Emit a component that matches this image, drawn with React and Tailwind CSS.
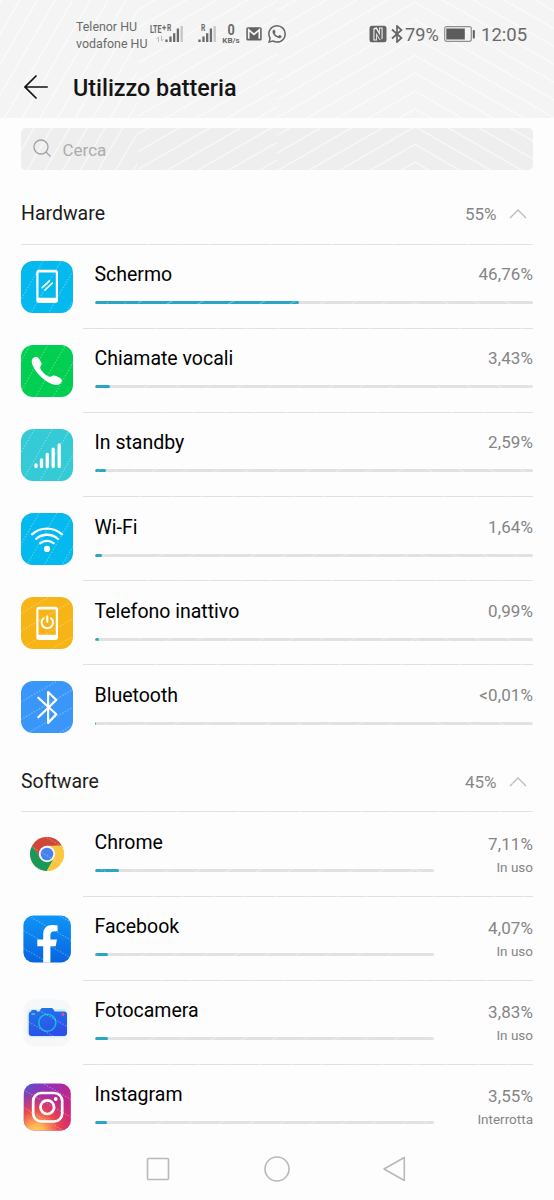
import React from "react";

const Tile = ({ children, className }) => (
  <div className={`size-[52px] rounded-[12px] ${className}`}>
    <svg viewBox="0 0 52 52" className="size-full" fill="none" stroke="#fff" strokeLinecap="round" strokeLinejoin="round">
      {children}
    </svg>
  </div>
);

const PhoneOutline = () => (
  <path fill="#fff" stroke="none" fillRule="evenodd" d="M18.300 8.800h15.700a3 3 0 0 1 3 3v27.300a3 3 0 0 1-3 3h-15.700a3 3 0 0 1-3-3V11.800a3 3 0 0 1 3-3Zm-.8 2.700v25.300h17.300V11.500Z" />
);

const ScreenIcon = () => (
  <Tile className="bg-[#04b9ed]">
    <PhoneOutline />
    <path strokeWidth="1.700" d="M21.200 26.700l7.200-6.800M24 29l7.300-7" />
  </Tile>
);

const CallIcon = () => (
  <Tile className="bg-[#02ce51]">
    <path fill="#fff" stroke="none" d="M11.600 13.600c.9-1.300 2.900-2.200 4.200-1.900 1.700.9 3.900 4.200 4.800 6.600.5 1.600-1.600 3-1.400 4.400.8 3.200 6.100 8.300 9.300 9.100 1.500.3 2.700-1.700 4.500-1.300 2.500.6 6 2.200 7.500 3.700 1.200 1.600-.5 4.200-2.400 5.200-3.900 1.900-10-.6-15.500-5.300-6.300-5.400-10.700-11.500-11.800-16.700-.2-1.300.1-2.700.8-3.800Z" />
  </Tile>
);

const StandbyIcon = () => (
  <Tile className="bg-[#34cbd6]">
    <path strokeWidth="3.300" d="M15 37.500v-1.600M20.500 37.500v-6.600M26.300 37.500V25.300M32.200 37.500V20.100M38.200 37.500V15.900" />
  </Tile>
);

const WifiIcon = () => (
  <Tile className="bg-[#04b9ed]">
    <path strokeWidth="2.300" d="M11 21.300a22.500 22.500 0 0 1 30 0M15.200 25.800a16.500 16.500 0 0 1 21.600 0M19.400 30.200a10.500 10.500 0 0 1 13.200 0" />
    <circle cx="26" cy="35.900" r="3.100" fill="#fff" stroke="none" />
  </Tile>
);

const IdleIcon = () => (
  <Tile className="bg-[#f7b417]">
    <svg x="0" y="1" width="52" height="52"><PhoneOutline /></svg>
    <path strokeWidth="2" d="M22.600 21.200a5.700 5.700 0 1 0 7.400 0M26.300 19.500v5.500" />
  </Tile>
);

const BluetoothIcon = () => (
  <Tile className="bg-[#3a97f9]">
    <path strokeWidth="2.200" d="M17.300 16.800l18 16.500-8.200 8.700V11l8.200 8L17.300 36.300" />
  </Tile>
);

const ChromeIcon = () => (
  <svg viewBox="-26 -26 52 52" className="size-[52px]">
    <circle r="17" fill="#fbc741" />
    <path fill="#d0463b" d="M-14.700-8.500A17 17 0 0 1 14.900-8.200H0L-7.100 4Z" />
    <path fill="#199857" d="M-14.700-8.500L-7.100 4.100L0 8.200L7 4L-.2 17A17 17 0 0 1-14.700-8.500Z" />
    <path fill="#fbc741" d="M14.900-8.200A17 17 0 0 1-.2 17L7.100 4.100L7-8.200Z" />
    <circle r="8.200" fill="#f5f5f5" />
    <circle r="6.300" fill="#4682ee" />
  </svg>
);

const FacebookIcon = () => (
  <svg viewBox="0 0 52 52" className="size-[52px]">
    <defs>
      <linearGradient id="fb" x1="0" y1="0" x2="0" y2="1">
        <stop stopColor="#0f95f8" />
        <stop offset="1" stopColor="#0765df" />
      </linearGradient>
    </defs>
    <rect x="2.400" y="2.500" width="47.500" height="47" rx="10" fill="url(#fb)" />
    <path fill="#fff" d="M22.200 49.500V33.200h-5.900v-6.700h5.900v-5.300c0-6 3.400-9.300 9-9.300 2.200 0 4.100.2 5.400.5v5.800h-3.200c-2.800 0-4 1.400-4 3.700v4.600h6.500l-1.200 6.700h-5.300v16.300Z" />
  </svg>
);

const CameraIcon = () => (
  <svg viewBox="0 0 52 52" className="size-[52px]">
    <defs>
      <linearGradient id="cam" x1="0" y1="0" x2=".3" y2="1">
        <stop stopColor="#1e78ea" />
        <stop offset="1" stopColor="#2c50e8" />
      </linearGradient>
    </defs>
    <rect x="2.500" y="2.500" width="47" height="47" rx="11" fill="#f5f7f8" />
    <rect x="6.300" y="12" width="40" height="28.500" rx="5" fill="#d3ecfb" />
    <path fill="url(#cam)" d="M10 14.500q0-1.500 1.500-1.500h3q1.500 0 1.500 1.500h2.300l1.500-2.500q.6-1 1.700-1h9q1.100 0 1.700 1l1.500 2.500H43a3 3 0 0 1 3 3V36a3 3 0 0 1-3 3H10.800a3 3 0 0 1-3-3V17.500q0-2.500 2.200-3Z" />
    <circle cx="26.300" cy="25.700" r="8.500" fill="none" stroke="#17b9dc" strokeWidth="1.600" />
    <circle cx="42" cy="17.500" r="1.400" fill="#e0567d" />
    <path stroke="#76b2f5" strokeWidth="1.500" d="M10.500 17h3.500" />
  </svg>
);

const InstagramIcon = () => (
  <svg viewBox="0 0 52 52" className="size-[52px]">
    <defs>
      <linearGradient id="igA" x1="0" y1="0" x2="1" y2=".6">
        <stop stopColor="#5553d0" />
        <stop offset=".45" stopColor="#9a2fb4" />
        <stop offset="1" stopColor="#cf2379" />
      </linearGradient>
      <radialGradient id="igB" cx=".27" cy="1.050" r=".95">
        <stop stopColor="#ffd567" />
        <stop offset=".2" stopColor="#fdb155" />
        <stop offset=".5" stopColor="#ef4a49" stopOpacity=".95" />
        <stop offset="1" stopColor="#d02a78" stopOpacity="0" />
      </radialGradient>
    </defs>
    <rect x="2.800" y="2.500" width="47" height="47" rx="10" fill="url(#igA)" />
    <rect x="2.800" y="2.500" width="47" height="47" rx="10" fill="url(#igB)" />
    <g fill="none" stroke="#fff" strokeWidth="2.700">
      <rect x="12.200" y="12" width="29" height="28.500" rx="8" />
      <circle cx="26.300" cy="26.200" r="6.800" />
    </g>
    <circle cx="34.700" cy="18" r="1.900" fill="#fff" />
  </svg>
);

const hardware = [
  { name: "Schermo", value: "46,76%", width: 46.8, Icon: ScreenIcon },
  { name: "Chiamate vocali", value: "3,43%", width: 3.5, Icon: CallIcon },
  { name: "In standby", value: "2,59%", width: 2.6, Icon: StandbyIcon },
  { name: "Wi-Fi", value: "1,64%", width: 1.7, Icon: WifiIcon },
  { name: "Telefono inattivo", value: "0,99%", width: 1.0, Icon: IdleIcon },
  { name: "Bluetooth", value: "<0,01%", width: 0.15, Icon: BluetoothIcon },
];

const software = [
  { name: "Chrome", value: "7,11%", width: 7.2, status: "In uso", Icon: ChromeIcon },
  { name: "Facebook", value: "4,07%", width: 4.1, status: "In uso", Icon: FacebookIcon },
  { name: "Fotocamera", value: "3,83%", width: 3.9, status: "In uso", Icon: CameraIcon },
  { name: "Instagram", value: "3,55%", width: 3.6, status: "Interrotta", Icon: InstagramIcon },
];

const Row = ({ item, last }) => {
  const { name, value, width, status, Icon } = item;
  return (
    <div className="flex h-[84.15px] pl-[21px]">
      <div className="w-[62px] shrink-0 pt-4">
        <Icon />
      </div>
      <div className={`mr-[21px] flex flex-1 border-b pl-[11.5px] ${last ? "border-transparent" : "border-[#e0e0e0]"}`}>
        <div className="flex-1">
          <div className="relative z-10 mt-[17.5px] h-[26px] text-[19.5px] leading-[26px] whitespace-nowrap text-black">{name}</div>
          <div className={`mt-[13px] h-[3px] overflow-hidden rounded-full bg-[#e1e1e1] ${status ? "w-[339px]" : "w-[438px]"}`}>
            <div className="h-full rounded-full bg-[#27a6c6]" style={{ width: `${width}%` }} />
          </div>
        </div>
        <div className={`relative z-10 flex w-0 flex-col items-end whitespace-nowrap text-[#858585] ${status ? "pt-[21.5px]" : "pt-[19.5px]"}`}>
          <span className="text-[17px] leading-5 tracking-[0.1px]">{value}</span>
          {status && <span className="mt-1 text-[13.5px] leading-[18px]">{status}</span>}
        </div>
      </div>
    </div>
  );
};

const Section = ({ title, total, items }) => (
  <section>
    <div className="mx-[21px] flex h-[63px] items-center border-b border-[#e0e0e0] pt-[3px] text-[#1b1b1b]">
      <h2 className="flex-1 text-[19.5px] leading-6">{title}</h2>
      <span className="text-[17px] leading-6 text-[#858585]">{total}</span>
      <svg viewBox="0 0 18 10" className="mr-[6px] ml-[12.5px] h-[10px] w-[18px]" fill="none" stroke="#bdbdbd" strokeWidth="1.400">
        <path d="M1 9l8-8 8 8" />
      </svg>
    </div>
    {items.map((item, i) => (
      <Row key={item.name} item={item} last={i === items.length - 1} />
    ))}
  </section>
);

const Signal = ({ className }) => (
  <svg viewBox="0 0 18 16" className={`h-4 w-[18px] ${className}`} fill="none" strokeWidth="2.300">
    <path stroke="#6a6a6a" d="M1.500 16v-2.500M5.500 16v-5.500M9.200 16V7.200M12.900 16V2.500" />
    <path stroke="#c6c6c6" d="M16.700 16V0" />
  </svg>
);

const StatusBar = () => (
  <div className="relative z-10 flex h-[58px] text-[#6a6a6a]">
    <div className="ml-[76px] w-[74px] shrink-0 pt-[17.5px] text-[12.400px] leading-[17px] whitespace-nowrap">
      <div>Telenor HU</div>
      <div>vodafone HU</div>
    </div>
    <div className="relative mt-[25px] h-[18px] w-[36px] shrink-0">
      <span className="absolute top-[-1px] left-0 origin-left scale-x-[.68] text-[10.500px] leading-[11px] font-bold whitespace-nowrap">LTE</span>
      <span className="absolute top-[-1px] left-[12px] origin-left scale-x-[.85] text-[9px] leading-[9px] font-bold">+</span>
      <span className="absolute top-[-1px] left-[17px] origin-left scale-x-75 text-[9px] leading-[9px] font-bold">R</span>
      <svg viewBox="0 0 8 6" className="absolute top-[11px] left-[6px] h-[6px] w-2" fill="none" stroke="#bbb">
        <path d="M2.500 6V1L.5 3M5.500 0v5l2-2" />
      </svg>
      <Signal className="absolute top-px left-[15px]" />
    </div>
    <div className="relative mt-[25px] ml-[12px] h-[18px] w-[22px] shrink-0">
      <span className="absolute top-[-1px] left-[3px] origin-left scale-x-75 text-[9px] leading-[9px] font-bold">R</span>
      <Signal className="absolute top-px left-0" />
    </div>
    <div className="mt-[24px] ml-[2px] flex w-[18px] shrink-0 flex-col items-center font-bold">
      <div className="scale-x-90 text-[14px] leading-[13px]">0</div>
      <div className="text-[8px] leading-[7px] whitespace-nowrap">KB/s</div>
    </div>
    <svg viewBox="0 0 16 14" className="mt-[27px] ml-[6px] h-[14px] w-4 shrink-0">
      <rect x=".300" y=".300" width="15.400" height="13.200" rx="1.500" fill="#626262" />
      <path d="M2.700 11.700V2.800L8 7.300l5.300-4.500v8.900" fill="none" stroke="#f5f5f5" strokeWidth="1.700" />
    </svg>
    <svg viewBox="0 0 24 24" className="mt-[25px] ml-[6px] size-[18px] shrink-0" fill="#666">
      <path d="M17.470 14.380c-.3-.15-1.760-.87-2.030-.97-.27-.1-.47-.15-.67.150-.2.300-.77.970-.94 1.160-.17.200-.35.220-.64.070-.3-.15-1.260-.46-2.390-1.470-.88-.79-1.480-1.760-1.650-2.060-.17-.3-.02-.46.130-.61.130-.13.300-.35.450-.52.150-.17.200-.3.300-.5.100-.2.050-.37-.03-.52-.07-.15-.67-1.610-.92-2.210-.24-.58-.49-.5-.67-.51h-.57c-.2 0-.52.070-.79.370-.27.300-1.040 1.020-1.040 2.480s1.060 2.880 1.210 3.070c.15.200 2.100 3.200 5.080 4.490.71.310 1.260.49 1.690.63.710.23 1.360.19 1.870.12.570-.09 1.760-.72 2.010-1.410.25-.69.250-1.290.17-1.410-.07-.13-.27-.2-.57-.35z" />
      <path fillRule="evenodd" d="M12.050 0C5.500 0 .16 5.330.16 11.890c0 2.100.55 4.140 1.590 5.950L.06 24l6.300-1.650a11.880 11.880 0 0 0 5.680 1.450c6.560 0 11.890-5.340 11.890-11.890A11.820 11.820 0 0 0 12.050 0Zm0 21.790a9.870 9.870 0 0 1-5.030-1.380l-.36-.21-3.740.98 1-3.650-.24-.37a9.860 9.860 0 0 1-1.510-5.260c0-5.450 4.430-9.880 9.890-9.880a9.880 9.880 0 1 1-.01 19.770Z" />
    </svg>
    <svg viewBox="0 0 18 18" className="mt-[25px] ml-[83px] h-[18px] w-[18px] shrink-0">
      <rect x=".500" y=".800" width="17" height="16.400" rx="2.500" fill="#646464" />
      <path d="M6.200 15.500V3.200l5.600 10.600V2.500" fill="none" stroke="#f5f5f5" strokeWidth="3.600" strokeLinejoin="bevel" />
      <path d="M6.300 14.500V4.500l5.400 9.200V3.500" fill="none" stroke="#646464" strokeWidth="1.700" strokeLinejoin="bevel" />
    </svg>
    <svg viewBox="0 0 12 18" className="mt-[25px] ml-[4px] h-[18px] w-3 shrink-0" fill="none" stroke="#666" strokeWidth="1.700">
      <path d="M1 4.500l9.500 8.500L6 17V1l4.500 4L1 13.500" />
    </svg>
    <span className="mt-[24px] ml-[2px] w-[38px] shrink-0 text-[18.200px] leading-[22px]">79%</span>
    <svg viewBox="0 0 31 16" className="mt-[26px] ml-px h-4 w-[31px] shrink-0">
      <rect x=".700" y=".700" width="26.600" height="14.600" rx="2" fill="none" stroke="#909090" strokeWidth="1.200" />
      <rect x="2.300" y="2.500" width="18.500" height="11" fill="#5c5c5c" />
      <rect x="28.800" y="4" width="2" height="8.500" rx=".8" fill="#5c5c5c" />
    </svg>
    <span className="mt-[24px] ml-[6px] text-[18.500px] leading-[22px]">12:05</span>
  </div>
);

const diagonals = (from, to, step, make) => {
  let d = "";
  for (let v = from; v < to; v += step) d += make(v);
  return d;
};

const Texture = () => (
  <svg className="pointer-events-none absolute inset-0" width="554" height="1200" viewBox="0 0 554 1200" fill="none" stroke="#fff">
    <defs>
      <clipPath id="left-top"><path d="M0 0h137v590H0z" /></clipPath>
      <clipPath id="left-mid"><path d="M0 590h137v220H0z" /></clipPath>
      <clipPath id="left-low"><path d="M0 810h137v390H0z" /></clipPath>
      <clipPath id="head"><path d="M0 0h554v118H0zM21 128h512v42H21z" /></clipPath>
      <clipPath id="body"><path d="M0 243h554v957H0z" /></clipPath>
    </defs>
    <g clipPath="url(#head)" strokeOpacity=".55" strokeWidth="1.500">
      <path clipPath="url(#left-top)" d={diagonals(2, 260, 17.7, (x) => `M${x} 0L${x - 110} 190`)} />
      <path d={diagonals(10, 280, 17.7, (y) => `M138 ${y}L277 ${y - 80}`)} />
      <path d={diagonals(2 - 17.8 * 8, 280, 17.8, (y) => `M277 ${y + 80}L415 ${y}L554 ${y + 80}`)} />
    </g>
    <g clipPath="url(#body)" strokeOpacity=".3" strokeWidth="1.200">
      <g strokeDasharray="1.500 1.500" strokeOpacity=".3">
        <path clipPath="url(#left-top)" d={diagonals(20, 520, 17.7, (x) => `M${x} 240L${x - 214} 610`)} />
        <path clipPath="url(#left-mid)" d={diagonals(590, 900, 17.7, (y) => `M0 ${y}L137 ${y - 79}`)} />
        <path clipPath="url(#left-low)" d={diagonals(740, 1200, 17.7, (y) => `M0 ${y}L137 ${y + 79}`)} />
      </g>
      <path d={diagonals(250, 1290, 17.7, (y) => `M138 ${y}L277 ${y - 80}L415 ${y - 160}L554 ${y - 80}`)} />
    </g>
  </svg>
);

export default function App() {
  return (
    <div className="relative flex h-[1200px] w-[554px] flex-col overflow-hidden bg-[#fdfdfd] font-[Roboto,sans-serif]">
      <header className="h-[118px] shrink-0 bg-[#f4f4f4]">
        <StatusBar />
        <div className="relative z-10 flex h-[60px] items-center pl-6">
          <svg viewBox="0 0 24 24" className="mt-[-2px] size-6" fill="none" stroke="#111" strokeWidth="1.700" strokeLinecap="round">
            <path d="M1.200 12H23.200M12 1L1 12l11 11" />
          </svg>
          <h1 className="mt-[-1px] ml-[25px] text-[23.300px] leading-7 font-medium text-[#151515]">Utilizzo batteria</h1>
        </div>
      </header>
      <div className="mx-[21px] mt-[10px] mb-[11px] flex h-[42px] shrink-0 items-center rounded-[5px] bg-[#eeeeee] pl-3">
        <svg viewBox="0 0 18 18" className="relative z-10 mt-[-2px] size-[18px]" fill="none" stroke="#a2a2a2" strokeWidth="1.300">
          <circle cx="8" cy="8" r="7" />
          <path d="M13 13l4.500 4.500" />
        </svg>
        <span className="relative z-10 ml-[11.500px] pt-[3px] text-[17px] text-[#acacac]">Cerca</span>
      </div>
      <main className="shrink-0 pt-[0.6px]">
        <Section title="Hardware" total="55%" items={hardware} />
        <Section title="Software" total="45%" items={software} />
      </main>
      <Texture />
      <nav className="absolute inset-x-0 bottom-0 flex h-[62px] items-center bg-[#fdfdfd]">
        <svg viewBox="0 0 24 24" className="ml-[146px] size-6" fill="none" stroke="#b9b9b9" strokeWidth="1.600"><rect x="1.500" y="1.500" width="21" height="21" rx="1" /></svg>
        <svg viewBox="0 0 26 26" className="ml-[94px] size-[26px]" fill="none" stroke="#b9b9b9" strokeWidth="1.600"><circle cx="13" cy="13" r="12" /></svg>
        <svg viewBox="0 0 24 26" className="ml-[92px] h-[26px] w-6" fill="none" stroke="#b9b9b9" strokeWidth="1.600" strokeLinejoin="round"><path d="M22.300 1.500v23L2 13Z" /></svg>
      </nav>
    </div>
  );
}
